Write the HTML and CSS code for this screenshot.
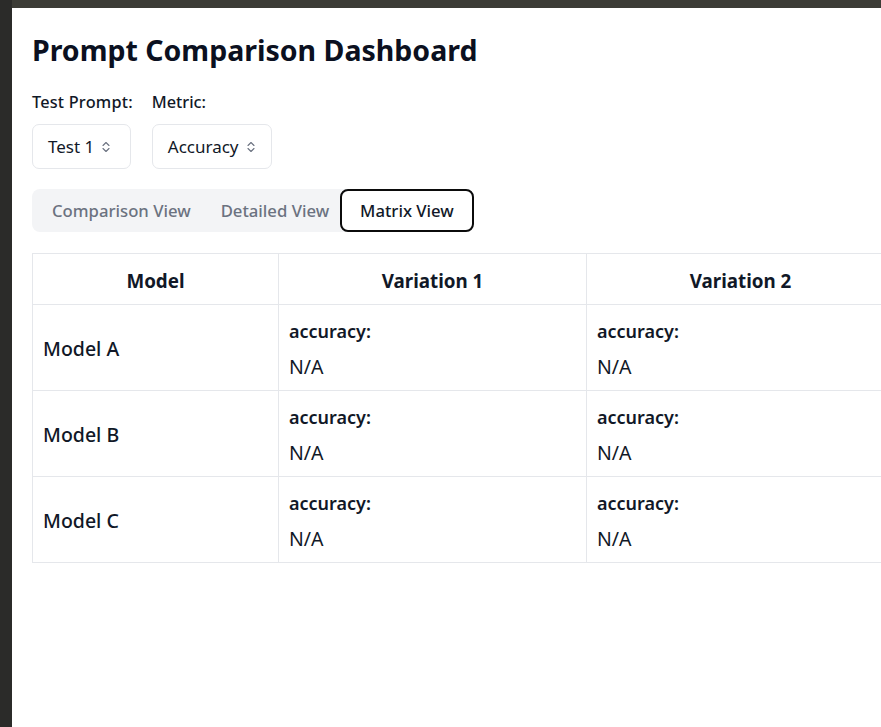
FILE: index.html
```html
<!DOCTYPE html>
<html>
<head>
<meta charset="utf-8">
<link rel="stylesheet" href="styles.css">
</head>
<body>
<div class="frame">
  <div class="topbar"></div>
  <main class="page">
    <h1 class="title">Prompt Comparison Dashboard</h1>
    <div class="controls">
      <div class="field">
        <div class="label">Test Prompt:</div>
        <div class="select sel-test"><span>Test 1</span>
          <svg class="chev" width="10" height="14" viewBox="0 0 10 14"><path d="M2 5.5 L5 2.5 L8 5.5 M2 8.5 L5 11.5 L8 8.5" fill="none" stroke="#6b7280" stroke-width="1.1" stroke-linecap="round" stroke-linejoin="round"/></svg>
        </div>
      </div>
      <div class="field">
        <div class="label">Metric:</div>
        <div class="select sel-metric"><span>Accuracy</span>
          <svg class="chev" width="10" height="14" viewBox="0 0 10 14"><path d="M2 5.5 L5 2.5 L8 5.5 M2 8.5 L5 11.5 L8 8.5" fill="none" stroke="#6b7280" stroke-width="1.1" stroke-linecap="round" stroke-linejoin="round"/></svg>
        </div>
      </div>
    </div>
    <div class="tabs">
      <div class="tab">Comparison View</div>
      <div class="tab">Detailed View</div>
      <div class="tab active">Matrix View</div>
    </div>
    <table class="matrix">
      <colgroup><col class="c-model"><col class="c-var"><col class="c-var"></colgroup>
      <thead>
        <tr><th>Model</th><th>Variation 1</th><th>Variation 2</th></tr>
      </thead>
      <tbody>
        <tr><td class="model">Model A</td><td><div class="metric">accuracy:</div><div class="val">N/A</div></td><td><div class="metric">accuracy:</div><div class="val">N/A</div></td></tr>
        <tr><td class="model">Model B</td><td><div class="metric">accuracy:</div><div class="val">N/A</div></td><td><div class="metric">accuracy:</div><div class="val">N/A</div></td></tr>
        <tr><td class="model">Model C</td><td><div class="metric">accuracy:</div><div class="val">N/A</div></td><td><div class="metric">accuracy:</div><div class="val">N/A</div></td></tr>
      </tbody>
    </table>
  </main>
</div>
</body>
</html>
```
FILE: styles.css
```css
html, body {
  margin: 0;
  padding: 0;
  height: 100%;
  overflow: hidden;
}
body {
  background: #2b2b29;
  font-family: "Noto Sans", "Open Sans", sans-serif;
  color: #111827;
}
.frame {
  margin-left: 12px;
  height: 100%;
  display: flex;
  flex-direction: column;
}
.topbar {
  height: 8px;
  background: #3c3c36;
  flex: none;
}
.page {
  flex: 1;
  background: #ffffff;
  padding: 24px 20px;
  overflow: hidden;
}
.title {
  margin: 0 0 22px;
  font-size: 28.5px;
  line-height: 36px;
  font-weight: 700;
  color: #0b1020;
}
.controls {
  display: flex;
  gap: 19px;
  margin-bottom: 20px;
}
.field:first-child .label { letter-spacing: 0.2px; }
.label {
  font-size: 16.3px;
  line-height: 24px;
  font-weight: 500;
  margin-bottom: 10px;
}
.select {
  box-sizing: border-box;
  height: 45px;
  border: 1px solid #e5e7eb;
  border-radius: 7px;
  background: #fff;
  display: flex;
  align-items: center;
  padding: 0 14px 0 15px;
  gap: 7px;
  font-size: 17px;
}
.sel-test { width: 99px; }
.sel-metric { width: 120px; }
.chev { flex: none; }
.tabs {
  display: inline-flex;
  background: #f3f4f6;
  border-radius: 8px;
  height: 43px;
  margin-bottom: 21px;
}
.tab {
  box-sizing: border-box;
  height: 43px;
  display: flex;
  align-items: center;
  padding: 0 15px;
  font-size: 16.7px;
  font-weight: 500;
  color: #6b7280;
  border-radius: 8px;
}
.tab:first-child { padding-left: 20px; }
.tab.active {
  background: #fff;
  color: #111827;
  border: 2px solid #0b0b0b;
  padding: 0 18px;
  margin-left: -4px;
}
.matrix {
  border-collapse: collapse;
  table-layout: fixed;
  width: 862px;
  border: 1px solid #e5e7eb;
}
.c-model { width: 246px; }
.c-var { width: 308px; }
.matrix th, .matrix td {
  border: 1px solid #e5e7eb;
  padding: 13px 10px 10px;
  font-size: 18px;
  line-height: 27px;
  text-align: left;
}
.matrix th {
  text-align: center;
  font-weight: 700;
  font-size: 18.8px;
  padding-top: 14px;
  padding-bottom: 9px;
}
.matrix td.model {
  font-weight: 500;
  font-size: 19.5px;
  vertical-align: middle;
  padding-top: 12px;
  padding-bottom: 11px;
}
.matrix td { vertical-align: top; }
.metric {
  font-weight: 600;
  margin-bottom: 8px;
}
.val {
  font-weight: 400;
  font-size: 19.5px;
}
```
